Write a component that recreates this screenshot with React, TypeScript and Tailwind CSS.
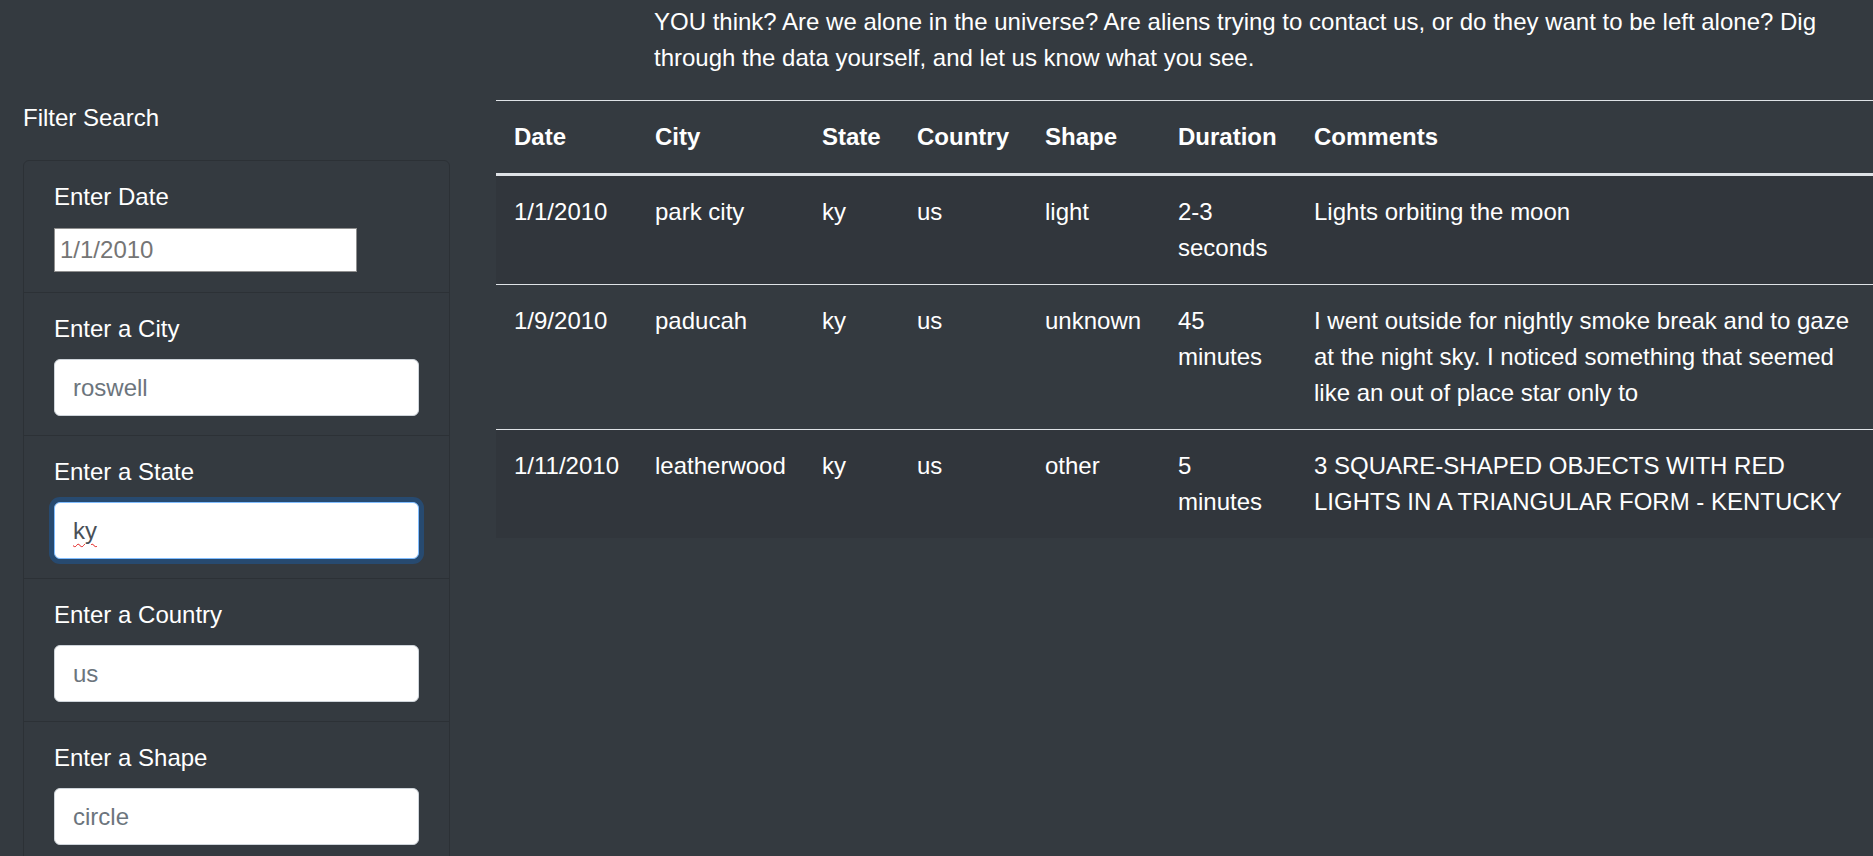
import React from 'react';

interface Sighting {
  date: string;
  city: string;
  state: string;
  country: string;
  shape: string;
  duration: string;
  comments: string;
}

const sightings: Sighting[] = [
  { date: '1/1/2010', city: 'park city', state: 'ky', country: 'us', shape: 'light', duration: '2-3 seconds', comments: 'Lights orbiting the moon' },
  { date: '1/9/2010', city: 'paducah', state: 'ky', country: 'us', shape: 'unknown', duration: '45 minutes', comments: 'I went outside for nightly smoke break and to gaze at the night sky. I noticed something that seemed like an out of place star only to' },
  { date: '1/11/2010', city: 'leatherwood', state: 'ky', country: 'us', shape: 'other', duration: '5 minutes', comments: '3 SQUARE-SHAPED OBJECTS WITH RED LIGHTS IN A TRIANGULAR FORM - KENTUCKY' },
];

const headers = ['Date', 'City', 'State', 'Country', 'Shape', 'Duration', 'Comments'];

const inputClass =
  'block h-[57px] w-full rounded-[6px] border border-[#ced4da] bg-white px-[18px] text-[24px] leading-[36px] text-[#495057] outline-none placeholder:text-[#6c757d]';

export default function App() {
  return (
    <div className="h-[856px] overflow-hidden bg-[#343a40] font-['Liberation_Sans',Arial,sans-serif] text-[24px] leading-[36px] text-white">
      {/* Intro */}
      <p className="ml-[654px] mb-[24px] w-[1190px] pt-[4px]">
        YOU think? Are we alone in the universe? Are aliens trying to contact us, or do they want to be left alone? Dig
        through the data yourself, and let us know what you see.
      </p>

      <div className="flex">
        {/* Filters */}
        <aside className="w-[473px] shrink-0 px-[23px]">
          <h5 className="mb-[24px]">Filter Search</h5>
          <div className="rounded-[6px] border border-[#2c3136]">
            <div className="border-b border-[#2c3136] px-[30px] pt-[18px] pb-[20px]">
              <label className="mb-[13px] block">Enter Date</label>
              <input
                type="text"
                placeholder="1/1/2010"
                className="block h-[44px] w-[303px] border border-[#8f8f8f] bg-white px-[5px] text-[24px] text-black outline-none placeholder:text-[#757575]"
              />
            </div>
            <div className="border-b border-[#2c3136] px-[30px] pt-[18px] pb-[19px]">
              <label className="mb-[12px] block">Enter a City</label>
              <input type="text" placeholder="roswell" className={inputClass} />
            </div>
            <div className="border-b border-[#2c3136] px-[30px] pt-[18px] pb-[19px]">
              <label className="mb-[12px] block">Enter a State</label>
              <div className="relative">
                <input
                  type="text"
                  defaultValue="ky"
                  spellCheck={false}
                  className="block h-[57px] w-full rounded-[6px] border border-[#80bdff] bg-white px-[18px] text-[24px] leading-[36px] text-[#495057] shadow-[0_0_0_5px_rgba(0,123,255,0.25)] outline-none"
                />
                <div className="pointer-events-none absolute inset-0 flex items-center px-[19px]">
                  <span className="text-transparent underline decoration-[#e0201e] decoration-wavy decoration-1 underline-offset-[4px]">
                    ky
                  </span>
                </div>
              </div>
            </div>
            <div className="border-b border-[#2c3136] px-[30px] pt-[18px] pb-[19px]">
              <label className="mb-[12px] block">Enter a Country</label>
              <input type="text" placeholder="us" className={inputClass} />
            </div>
            <div className="px-[30px] pt-[18px] pb-[19px]">
              <label className="mb-[12px] block">Enter a Shape</label>
              <input type="text" placeholder="circle" className={inputClass} />
            </div>
          </div>
        </aside>

        {/* Results */}
        <main className="pl-[23px]">
          <table className="w-[1377px] table-fixed border-collapse text-left">
            <colgroup>
              <col className="w-[141px]" />
              <col className="w-[167px]" />
              <col className="w-[95px]" />
              <col className="w-[128px]" />
              <col className="w-[133px]" />
              <col className="w-[136px]" />
              <col className="w-[577px]" />
            </colgroup>
            <thead>
              <tr>
                {headers.map(h => (
                  <th
                    key={h}
                    className="border-t border-b-[3px] border-t-[#dee2e6] border-b-[#dee2e6] p-[18px] align-bottom font-bold"
                  >
                    {h}
                  </th>
                ))}
              </tr>
            </thead>
            <tbody>
              {sightings.map((s, i) => (
                <tr key={s.date} className={i % 2 === 0 ? 'bg-[#31363c]' : ''}>
                  {[s.date, s.city, s.state, s.country, s.shape, s.duration, s.comments].map((v, j) => (
                    <td key={j} className="border-t border-[#dee2e6] p-[18px] align-top">
                      {v}
                    </td>
                  ))}
                </tr>
              ))}
            </tbody>
          </table>
        </main>
      </div>
    </div>
  );
}
